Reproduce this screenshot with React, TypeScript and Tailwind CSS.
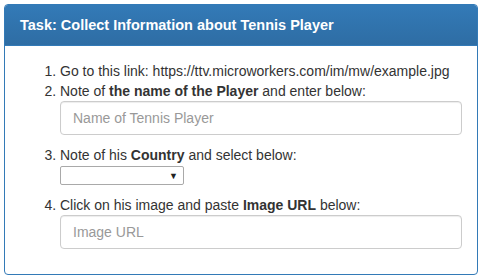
import React from 'react';

const App: React.FC = () => {
  return (
    <div className="p-1 bg-white font-['Liberation_Sans',Arial,sans-serif] text-[14px] text-[#333] w-[483px] h-[280px]">
      <div className="border border-[#337ab7] rounded-[4px] w-[474px] overflow-hidden">
        {/* Heading */}
        <div className="h-[41px] px-[15px] flex items-center bg-gradient-to-b from-[#337ab7] to-[#2e6da4] border-b border-[#337ab7]">
          <h3 className="text-[14.5px] font-bold text-white leading-[20px]">
            Task: Collect Information about Tennis Player
          </h3>
        </div>

        {/* Body */}
        <div className="p-[15px]">
          <ol className="list-decimal pl-[40px] leading-[20px]">
            <li>Go to this link: https://ttv.microworkers.com/im/mw/example.jpg</li>
            <li>
              Note of <b>the name of the Player</b> and enter below:
              <input
                type="text"
                placeholder="Name of Tennis Player"
                className="block w-full h-[34px] mb-[10px] px-[12px] border border-[#ccc] rounded-[4px] text-[14px] text-[#555] placeholder:text-[#999] shadow-[inset_0_1px_1px_rgba(0,0,0,0.075)] outline-none"
              />
            </li>
            <li>
              Note of his <b>Country</b> and select below:
              <div className="relative w-[124px] h-[19px] mt-[1px] mb-[10px]">
                <select className="appearance-none block w-full h-full border border-[#a9a9a9] rounded-[2px] bg-white text-[13px] outline-none" />
                <span className="absolute right-[6px] top-[2px] text-[9px] leading-[16px] text-[#222] pointer-events-none">▼</span>
              </div>
            </li>
            <li>
              Click on his image and paste <b>Image URL</b> below:
              <input
                type="text"
                placeholder="Image URL"
                className="block w-full h-[34px] mb-[10px] px-[12px] border border-[#ccc] rounded-[4px] text-[14px] text-[#555] placeholder:text-[#999] shadow-[inset_0_1px_1px_rgba(0,0,0,0.075)] outline-none"
              />
            </li>
          </ol>
        </div>
      </div>
    </div>
  );
};

export default App;
